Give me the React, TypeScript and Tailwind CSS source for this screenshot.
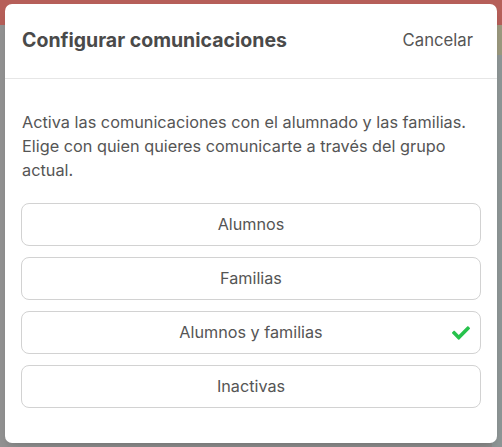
import { FaCheck } from 'react-icons/fa';

const options = ['Alumnos', 'Familias', 'Alumnos y familias', 'Inactivas'];

export default function App() {
  const selected = 'Alumnos y familias';

  return (
    <div className="relative w-[502px] h-[447px] overflow-hidden bg-[#8e8e8e] font-['Inter',sans-serif]">
      {/* fondo atenuado */}
      <div className="h-[25px] bg-[#b65f59] flex justify-end items-start gap-12 pr-14 pt-[1px] text-[#e9c4c0] text-base leading-5">
        <span>Pestañas ▾</span>
        <span>Programación</span>
      </div>
      <div className="flex h-[422px]">
        <div className="w-[40px] bg-[#939393]" />
        <div className="flex-1" />
        <div className="w-[10px] flex flex-col">
          <div className="h-[30px] bg-[#9c9a7f]" />
          <div className="flex-1 bg-[#8f9797]" />
        </div>
      </div>

      {/* modal */}
      <div className="absolute left-[5px] top-[4px] w-[492px] h-[439px] bg-white rounded-[7px] shadow-lg">
        <div className="h-[75px] flex items-center justify-between pl-[17px] pr-[24px] border-b border-[#e6e6e6]">
          <h2 className="text-[19.5px] font-bold text-[#4a4a4a]">Configurar comunicaciones</h2>
          <button className="text-[16.7px] text-[#555]">Cancelar</button>
        </div>
        <div className="px-4 pt-[31px]">
          <p className="px-[1px] text-[16.3px] leading-6 text-[#555]">
            Activa las comunicaciones con el alumnado y las familias. Elige con quien quieres comunicarte a través del grupo actual.
          </p>
          <div className="mt-[21px] flex flex-col gap-[11px]">
            {options.map((o) => (
              <button
                key={o}
                className="relative h-[43px] w-full rounded-[8px] border border-[#d2d2d2] text-[16.2px] text-[#555] flex items-center justify-center"
              >
                {o}
                {o === selected && (
                  <FaCheck className="absolute right-[10px] w-[18px] h-[18px] text-[#27c24c]" />
                )}
              </button>
            ))}
          </div>
        </div>
      </div>
    </div>
  );
}
